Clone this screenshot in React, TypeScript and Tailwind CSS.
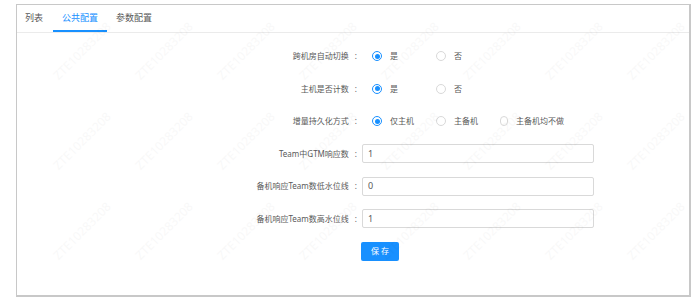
import React from "react";

const font = { fontFamily: '"Noto Sans", "Noto Sans CJK SC", sans-serif' };

function Radio({ checked, label }: { checked?: boolean; label: string }) {
  return (
    <div className="flex w-[64px] items-center gap-[8px]">
      <span
        className={
          "flex h-[10px] w-[10px] items-center justify-center rounded-full border " +
          (checked ? "border-[#1890ff]" : "border-[#d9d9d9]")
        }
      >
        {checked && <span className="h-[5px] w-[5px] rounded-full bg-[#1890ff]" />}
      </span>
      <span className="whitespace-nowrap text-[8px] text-[#595959]">{label}</span>
    </div>
  );
}

function Row({ label, h, children }: { label: string; h: string; children: React.ReactNode }) {
  return (
    <div className={"flex items-center " + h}>
      <div className="flex w-[342px] items-center justify-end whitespace-nowrap pr-[2px] text-[8px] text-[#595959]">
        <span>{label}</span>
        <span className="ml-[6px]">:</span>
      </div>
      <div className="ml-[3px] flex items-center">{children}</div>
    </div>
  );
}

function Input({ value }: { value: string }) {
  return (
    <div className="flex h-[19px] w-[232px] items-center rounded-[2px] border border-[#d9d9d9] bg-white pl-[5px] text-[9px] text-[#595959]">
      {value}
    </div>
  );
}

const marks: { x: number; y: number }[] = [];
for (let r = 0; r < 3; r++) {
  for (let c = 0; c < 8; c++) {
    marks.push({ x: c * 82 + 60, y: r * 90 + 20 });
  }
}

export default function App() {
  return (
    <div className="relative h-[305px] w-[700px] overflow-hidden bg-white" style={font}>
      <div className="ml-[16px] mt-[4px] h-[293px] w-[675px] border-b-2 border-l border-r-2 border-t border-[#c8c8c8] bg-white">
        <div className="flex h-[28px] items-end border-b border-[#ebebeb] pl-[7px]">
          <div className="flex h-full items-center px-[1px] pb-[1px] text-[9px] text-[#595959]">
            <span>列表</span>
          </div>
          <div className="ml-[9px] flex h-full flex-col">
            <div className="flex flex-1 items-center px-[9px] text-[9px] text-[#1890ff]">公共配置</div>
            <div className="h-[2px] bg-[#1890ff]" />
          </div>
          <div className="ml-[9px] flex h-full items-center pb-[1px] text-[9px] text-[#595959]">参数配置</div>
        </div>
        <div className="flex flex-col pt-[7px]">
          <Row label="跨机房自动切换" h="h-[32px]">
            <div className="ml-[10px] flex">
              <Radio checked label="是" />
              <Radio label="否" />
            </div>
          </Row>
          <Row label="主机是否计数" h="h-[33px]">
            <div className="ml-[10px] flex">
              <Radio checked label="是" />
              <Radio label="否" />
            </div>
          </Row>
          <Row label="增量持久化方式" h="h-[32px]">
            <div className="ml-[10px] flex">
              <Radio checked label="仅主机" />
              <Radio label="主备机" />
              <Radio label="主备机均不做" />
            </div>
          </Row>
          <Row label="Team中GTM响应数" h="h-[33px]">
            <Input value="1" />
          </Row>
          <Row label="备机响应Team数低水位线" h="h-[32px]">
            <Input value="0" />
          </Row>
          <Row label="备机响应Team数高水位线" h="h-[33px]">
            <Input value="1" />
          </Row>
          <div className="flex h-[32px] items-center pl-[344px]">
            <button className="flex h-[19px] w-[38px] items-center justify-center rounded-[2px] bg-[#1890ff] text-[8px] text-white">
              保&nbsp;存
            </button>
          </div>
        </div>
      </div>
      <div className="pointer-events-none absolute inset-0">
        {marks.map((m, i) => (
          <span
            key={i}
            className="absolute origin-bottom-left -rotate-45 whitespace-nowrap text-[12px] leading-none text-[#000] opacity-[0.025]"
            style={{ left: m.x, top: m.y + 50 }}
          >
            ZTE10283208
          </span>
        ))}
      </div>
    </div>
  );
}
